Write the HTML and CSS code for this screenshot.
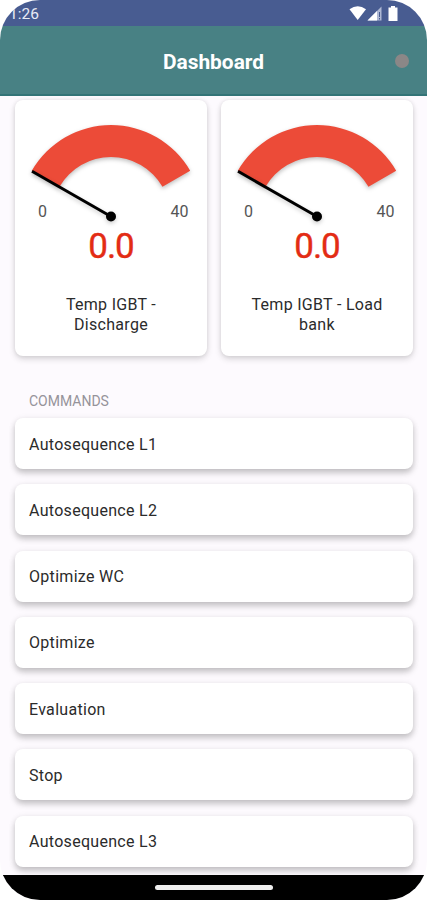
FILE: index.html
```html
<!DOCTYPE html>
<html lang="en">
<head>
<meta charset="utf-8">
<title>Dashboard</title>
<link rel="stylesheet" href="styles.css">
</head>
<body>
<div class="screen">
  <div class="status">
    <span class="clock">1:26</span>
    <svg class="status-icons" width="52" height="26" viewBox="0 0 52 26">
      <path d="M.5 9.300Q8.700 3.200 17 9.300L8.700 20Z" fill="#fff"/>
      <path d="M18.500 20.500L32.500 6.500V20.500Z" fill="#aeb8d4"/>
      <path d="M18.500 20.500L28 11V20.500Z" fill="#fff"/>
      <path d="M30 12h1v5h-1zM30 18h1v1.500h-1z" fill="#485c91"/>
      <path d="M42 6h4v1.500h2.500v13.500h-9V7.500H42Z" fill="#fff"/>
    </svg>
  </div>
  <header class="appbar">
    <h1 class="title">Dashboard</h1>
    <span class="indicator"></span>
  </header>
  <main class="content">
    <div class="gauges">
      <section class="card gauge">
        <svg class="dial" width="192" height="128" viewBox="0 0 192 128">
          <path class="band" d="M16.800 70.700A91.500 91.500 0 0 1 175.200 70.700L147.500 86.700A59.500 59.500 0 0 0 44.500 86.700Z"/>
          <g class="needle"><path d="M17 71.300L96 116.500"/><circle cx="96" cy="116.500" r="5"/></g>
          <text x="27.500" y="116.500" class="tick">0</text>
          <text x="164.500" y="116.500" class="tick">40</text>
        </svg>
        <div class="value">0.0</div>
        <div class="name">Temp IGBT -<br>Discharge</div>
      </section>
      <section class="card gauge">
        <svg class="dial" width="192" height="128" viewBox="0 0 192 128">
          <path class="band" d="M16.800 70.700A91.500 91.500 0 0 1 175.200 70.700L147.500 86.700A59.500 59.500 0 0 0 44.500 86.700Z"/>
          <g class="needle"><path d="M17 71.300L96 116.500"/><circle cx="96" cy="116.500" r="5"/></g>
          <text x="27.500" y="116.500" class="tick">0</text>
          <text x="164.500" y="116.500" class="tick">40</text>
        </svg>
        <div class="value">0.0</div>
        <div class="name">Temp IGBT - Load<br>bank</div>
      </section>
    </div>
    <h2 class="heading">COMMANDS</h2>
    <div class="commands">
      <div class="card command">Autosequence L1</div>
      <div class="card command">Autosequence L2</div>
      <div class="card command">Optimize WC</div>
      <div class="card command">Optimize</div>
      <div class="card command">Evaluation</div>
      <div class="card command">Stop</div>
      <div class="card command">Autosequence L3</div>
    </div>
  </main>
  <footer class="navbar"><span class="handle"></span></footer>
</div>
</body>
</html>
```
FILE: styles.css
```css
* { box-sizing: border-box; }
body { margin: 0; background: #fff; font-family: Roboto, sans-serif; color: #2b2b2b; }
.screen { width: 427px; height: 900px; display: flex; flex-direction: column; overflow: hidden; border-radius: 40px; background: #fdfafe; }
.status { flex: none; height: 26px; background: #485c91; display: flex; justify-content: space-between; padding: 0 26px 0 9px; }
.clock { color: #e8ebf5; font-size: 15.500px; line-height: 28px; }
.appbar { flex: none; height: 70px; background: #488184; border-bottom: 2px solid #337477; display: grid; grid-template-columns: 1fr auto 1fr; align-items: center; padding: 3px 18px 0; }
.title { grid-column: 2; margin: 0; color: #fff; font-size: 20.900px; font-weight: 700; line-height: 24px; }
.indicator { justify-self: end; width: 14px; height: 14px; margin-top: -1px; border-radius: 50%; background: #8b8787; }
.content { flex: 1; min-height: 0; overflow: hidden; padding: 4px 14px 0 15px; }
.card { background: #fff; border-radius: 8px; box-shadow: 0 3px 6px rgba(0,0,0,.15), 0 0 4px rgba(0,0,0,.08); }
.gauges { display: grid; grid-template-columns: 192px 192px; gap: 14px; }
.gauge { height: 256px; display: flex; flex-direction: column; align-items: center; text-align: center; }
.dial { display: block; flex: none; }
.band { fill: #ec4b38; filter: drop-shadow(0 2px 2px rgba(0,0,0,.25)); }
.needle { stroke: #000; stroke-width: 3; filter: drop-shadow(0 2px 2px rgba(0,0,0,.2)); }
.needle circle { stroke: none; }
.tick { font-size: 16px; text-anchor: middle; fill: #555; }
.value { margin-top: -1px; font-size: 35px; line-height: 40px; letter-spacing: -1.100px; color: #e32c14; -webkit-text-stroke: .4px #e32c14; }
.name { margin-top: 28px; font-size: 16px; line-height: 20px; letter-spacing: .3px; }
.heading { margin: 36px 0 8px 14px; font-size: 14px; font-weight: 400; line-height: 18px; color: #96939a; }
.commands { display: flex; flex-direction: column; gap: 15.300px; }
.command { flex: none; height: 51px; padding: 1px 14px 0; display: flex; align-items: center; font-size: 16px; letter-spacing: .3px; box-shadow: 0 4px 6px rgba(0,0,0,.2), 0 1px 7px rgba(0,0,0,.08); }
.navbar { flex: none; height: 25px; background: #000; display: flex; justify-content: center; align-items: center; }
.handle { width: 118px; height: 5px; border-radius: 3px; background: #eee; }
```
